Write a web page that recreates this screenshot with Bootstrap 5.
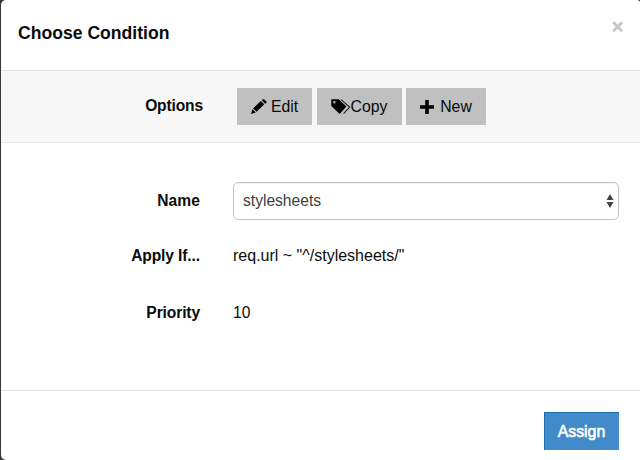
<!DOCTYPE html>
<html lang="en">
<head>
<meta charset="utf-8">
<meta name="viewport" content="width=device-width, initial-scale=1">
<title>Choose Condition</title>
<link href="https://cdn.jsdelivr.net/npm/bootstrap@5.3.0/dist/css/bootstrap.min.css" rel="stylesheet">
<style>
  body { background: #38383a; font-family: "Liberation Sans", Arial, sans-serif; font-size: 15.6px; line-height: 20px; color: #0c0c0c; overflow: hidden; }
  .dialog-shell { height: 460px; padding-left: 1px; }
  .dialog-box { height: 460px; border: 0; border-radius: 5px 3px 0 5px; color: inherit; overflow: hidden; background: #fff; }
  .dialog-head { height: 71px; padding: 0 15px 5px 17px; border-bottom: 1px solid #e2e2e2; border-radius: 0; }
  .dialog-title { font-size: 17.6px; font-weight: 700; line-height: 24px; }
  .dialog-close { width: 14px; height: 14px; line-height: 0; margin-top: -11px; }
  .options-row { height: 72px; background: #f7f7f7; border-bottom: 1px solid #e9e9e9; }
  .options-label { width: 202px; margin-right: 34px; padding-bottom: 2px; font-size: 15.6px; letter-spacing: -.15px; }
  .btn-tool { --bs-btn-bg: #c0c0c0; --bs-btn-hover-bg: #b2b2b2; --bs-btn-color: #080808; height: 37px; font-size: 15.8px; line-height: 20px; border: 0; }
  .btn-edit { width: 75px; } .btn-copy { width: 85px; } .btn-new { width: 80px; }
  .btn-new svg { margin-right: 6px; }
  .tool-set { gap: 4.5px; }
  .fields { padding: 39px 21px 0 0; }
  .field-label { width: 199px; margin-right: 33px; font-size: 15.6px; letter-spacing: -.12px; }
  .name-row { height: 38px; margin-bottom: 26px; }
  .name-row .field-label { letter-spacing: .1px; }
  .text-row { height: 20px; margin-bottom: 37px; }
  .select-wrap { height: 38px; border: 1px solid #c4c4c4; border-radius: 5px; padding: 0 4px 0 9px; color: #404040; box-shadow: inset 0 1px 1px rgba(0,0,0,.06); }
  .expression { font-size: 16px; }
  .dialog-foot { height: 70px; padding: 0 21px 0 0; border-top: 1px solid #e4e4e4; border-radius: 0; }
  .btn-assign { --bs-btn-bg: #428bca; --bs-btn-hover-bg: #3276b1; --bs-btn-color: #fff; --bs-btn-hover-color: #fff; width: 75px; height: 38px; margin: 11px 0 0; padding: 2px 0 0; font-size: 15.8px; line-height: 20px; border: 0; box-shadow: inset 1px 1px #1f70b3; -webkit-text-stroke: .6px #fff; }
</style>
</head>
<body>
<main class="dialog-shell">
  <div class="modal-content dialog-box">
    <div class="modal-header dialog-head flex-shrink-0">
      <h1 class="dialog-title mb-0">Choose Condition</h1>
      <button type="button" class="btn p-0 border-0 dialog-close" aria-label="Close">
        <svg width="14" height="14" viewBox="0 0 14 14"><path d="M2.3 2.3 11.2 11.2M11.2 2.3 2.3 11.2" stroke="#c8c8c8" stroke-width="3"/></svg>
      </button>
    </div>
    <div class="options-row d-flex align-items-center flex-shrink-0">
      <div class="options-label fw-bold text-end">Options</div>
      <div class="tool-set d-flex">
        <button type="button" class="btn btn-tool btn-edit rounded-0 p-0 d-flex align-items-center justify-content-center">
          <svg class="me-1" width="16" height="16" viewBox="0 0 16 16"><path d="M0 15 1.5 10.2 4.8 13.5ZM2.1 9.5 9.8 1.9 13.3 5.2 5.6 12.8ZM10.6 1.1 11.6 .4Q12.5-.4 13.3.4L15.2 2.3Q16 3.1 15.2 4L14.1 4.7Z"/></svg>Edit
        </button>
        <button type="button" class="btn btn-tool btn-copy rounded-0 p-0 d-flex align-items-center justify-content-center">
          <svg width="20" height="16" viewBox="0 0 20 16"><path fill-rule="evenodd" d="M.3 .3H7.8L15.4 7.6 8.7 15 .3 7ZM3.4 2A1.2 1.2 0 1 0 3.4 4.4 1.2 1.2 0 1 0 3.4 2Z"/><path d="M10 .6 18.7 8 12.6 14.6" fill="none" stroke="#222" stroke-width="1.1"/></svg>Copy
        </button>
        <button type="button" class="btn btn-tool btn-new rounded-0 p-0 d-flex align-items-center justify-content-center">
          <svg width="14" height="14" viewBox="0 0 14 14"><path d="M5.2 0H8.8V5.2H14V8.8H8.8V14H5.2V8.8H0V5.2H5.2Z"/></svg>New
        </button>
      </div>
    </div>
    <div class="fields flex-grow-1">
      <div class="name-row d-flex align-items-center">
        <div class="field-label fw-bold text-end flex-shrink-0">Name</div>
        <div class="select-wrap flex-grow-1 d-flex align-items-center justify-content-between" role="combobox" aria-label="Name" tabindex="0">
          <span>stylesheets</span>
          <svg width="8" height="14" viewBox="0 0 8 14"><path d="M4 0 7.5 6H.5ZM.5 8H7.5L4 14Z" fill="#444"/></svg>
        </div>
      </div>
      <div class="text-row d-flex align-items-center">
        <div class="field-label fw-bold text-end flex-shrink-0">Apply If...</div>
        <div class="expression">req.url ~ "^/stylesheets/"</div>
      </div>
      <div class="text-row d-flex align-items-center">
        <div class="field-label fw-bold text-end flex-shrink-0">Priority</div>
        <div>10</div>
      </div>
    </div>
    <div class="modal-footer dialog-foot flex-shrink-0 justify-content-end">
      <button type="button" class="btn btn-assign rounded-0">Assign</button>
    </div>
  </div>
</main>
<script src="https://cdn.jsdelivr.net/npm/bootstrap@5.3.0/dist/js/bootstrap.bundle.min.js"></script>
</body>
</html>
